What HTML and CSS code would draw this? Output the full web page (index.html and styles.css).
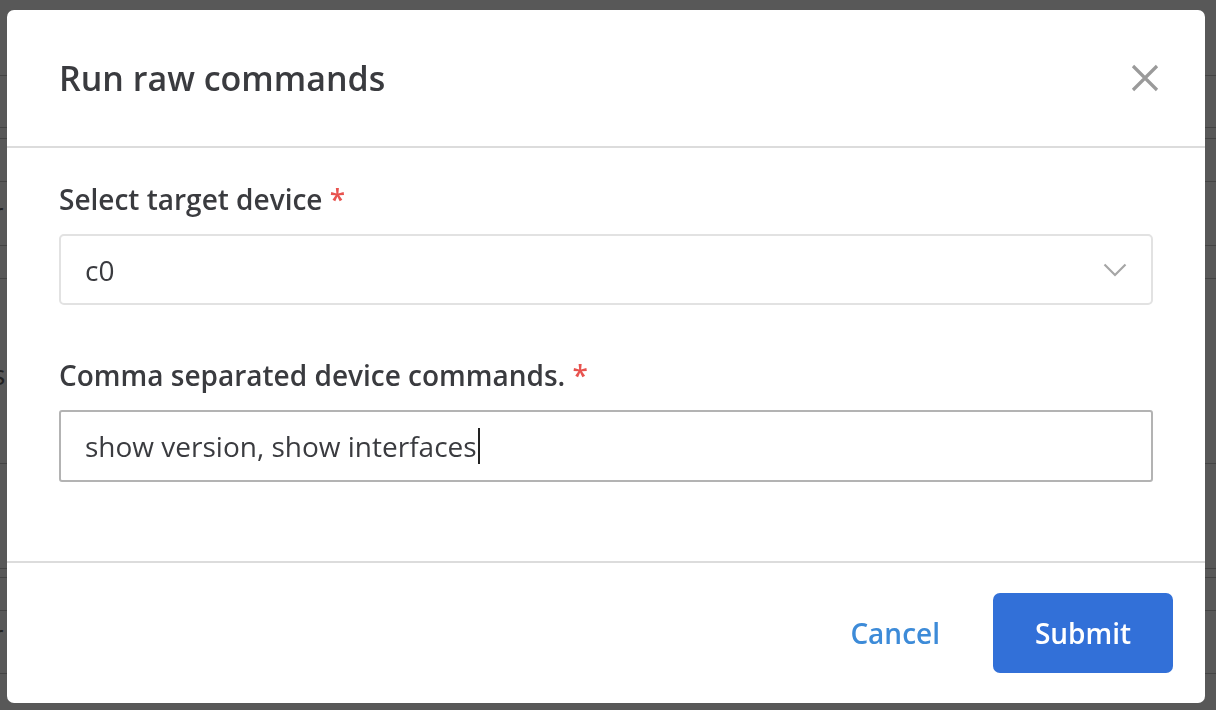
FILE: index.html
```html
<!DOCTYPE html>
<html lang="en">
<head>
<meta charset="utf-8">
<title>Run raw commands</title>
<link rel="stylesheet" href="styles.css">
</head>
<body>
<div class="page">
  <div class="row r1"></div>
  <div class="row r2"></div>
  <div class="row r3"></div>
  <div class="row r4"></div>
  <div class="row r5"><span class="frag f1">r</span></div>
  <div class="row r6"></div>
  <div class="row r7"><span class="frag f2">s</span></div>
  <div class="row r8"></div>
  <div class="row r9"></div>
  <div class="row r10"></div>
  <div class="row r11"><span class="frag f3">r</span></div>
</div>
<div class="overlay">
  <div class="modal">
    <div class="modal-header">
      <h2 class="title">Run raw commands</h2>
      <button class="close" aria-label="Close">
        <svg width="28" height="28" viewBox="0 0 28 28"><path d="M2 2 L26 26 M26 2 L2 26" stroke="#9a9a9a" stroke-width="3.2" stroke-linecap="butt" fill="none"/></svg>
      </button>
    </div>
    <div class="modal-body">
      <div class="field">
        <label class="label">Select target device <span class="req">*</span></label>
        <div class="select">
          <span class="value">c0</span>
          <svg class="chev" width="24" height="14" viewBox="0 0 24 14"><path d="M1.5 1.5 L12 12 L22.5 1.5" stroke="#a6a6a6" stroke-width="2.2" fill="none"/></svg>
        </div>
      </div>
      <div class="field">
        <label class="label">Comma separated device commands. <span class="req">*</span></label>
        <div class="input"><span class="value">show version, show interfaces</span><span class="caret"></span></div>
      </div>
    </div>
    <div class="modal-footer">
      <button class="btn-link">Cancel</button>
      <button class="btn-primary">Submit</button>
    </div>
  </div>
</div>
</body>
</html>
```
FILE: styles.css
```css
* { box-sizing: border-box; }
html, body { margin: 0; padding: 0; }
body {
  width: 1216px;
  height: 710px;
  overflow: hidden;
  background: #585858;
  font-family: "Open Sans", "Noto Sans", sans-serif;
}
.page {
  display: flex;
  flex-direction: column;
  width: 100%;
  height: 100%;
}
.row { border-bottom: 1px solid #444; flex: none; position: relative; }
.r1 { height: 76px; }
.r2 { height: 52px; }
.r3 { height: 11px; }
.r4 { height: 43px; }
.r5 { height: 64px; }
.r6 { height: 33px; }
.r7 { height: 185px; }
.r8 { height: 105px; }
.r9 { height: 9px; }
.r10 { height: 33px; }
.r11 { height: 63px; }
.frag {
  position: absolute;
  left: -8px;
  color: #222;
  font-size: 28px;
  line-height: 38px;
}
.f1 { bottom: 14px; }
.f2 { bottom: 70px; }
.f3 { bottom: 20px; }
.overlay {
  position: fixed;
  inset: 0;
  display: flex;
  align-items: flex-start;
  padding: 10px 0 0 7px;
}
.modal {
  width: 1198px;
  height: 693px;
  background: #fff;
  border-radius: 7px;
  display: flex;
  flex-direction: column;
  overflow: hidden;
}
.modal-header {
  height: 138px;
  flex: none;
  display: flex;
  align-items: center;
  justify-content: space-between;
  padding: 0 46px 0 52px;
  border-bottom: 2px solid #dcdcdc;
}
.title {
  margin: 0;
  font-size: 34px;
  font-weight: 600;
  color: #3a3b3f;
  letter-spacing: 0;
}
.close {
  border: 0;
  background: none;
  padding: 0;
  width: 28px;
  height: 28px;
  display: flex;
}
.modal-body {
  flex: 1;
  padding: 32px 52px 0 52px;
  display: flex;
  flex-direction: column;
  gap: 51px;
}
.field { display: flex; flex-direction: column; gap: 16px; }
.label {
  font-size: 28px;
  font-weight: 600;
  color: #3a3b3f;
  line-height: 38px;
}
.req { color: #e8534f; }
.select {
  height: 71px;
  border: 2px solid #e2e2e2;
  border-radius: 5px;
  display: flex;
  align-items: center;
  justify-content: space-between;
  padding: 0 24px 0 24px;
}
.value {
  font-size: 28px;
  color: #3a3b3f;
}
.input {
  height: 72px;
  border: 2px solid #b3b3b3;
  border-radius: 3px;
  display: flex;
  align-items: center;
  padding: 0 24px;
}
.caret {
  display: inline-block;
  width: 2px;
  height: 36px;
  background: #222;
  margin-left: 1px;
}
.modal-footer {
  height: 142px;
  flex: none;
  border-top: 2px solid #dcdcdc;
  display: flex;
  align-items: center;
  justify-content: flex-end;
  gap: 53px;
  padding: 0 32px 0 0;
}
.btn-link {
  border: 0;
  background: none;
  padding: 0;
  font-family: inherit;
  font-size: 28px;
  font-weight: 600;
  color: #3d8bd8;
}
.btn-primary {
  width: 180px;
  height: 80px;
  border: 0;
  border-radius: 7px;
  background: #3270d8;
  color: #fff;
  font-family: inherit;
  font-size: 28px;
  font-weight: 600;
}
```
